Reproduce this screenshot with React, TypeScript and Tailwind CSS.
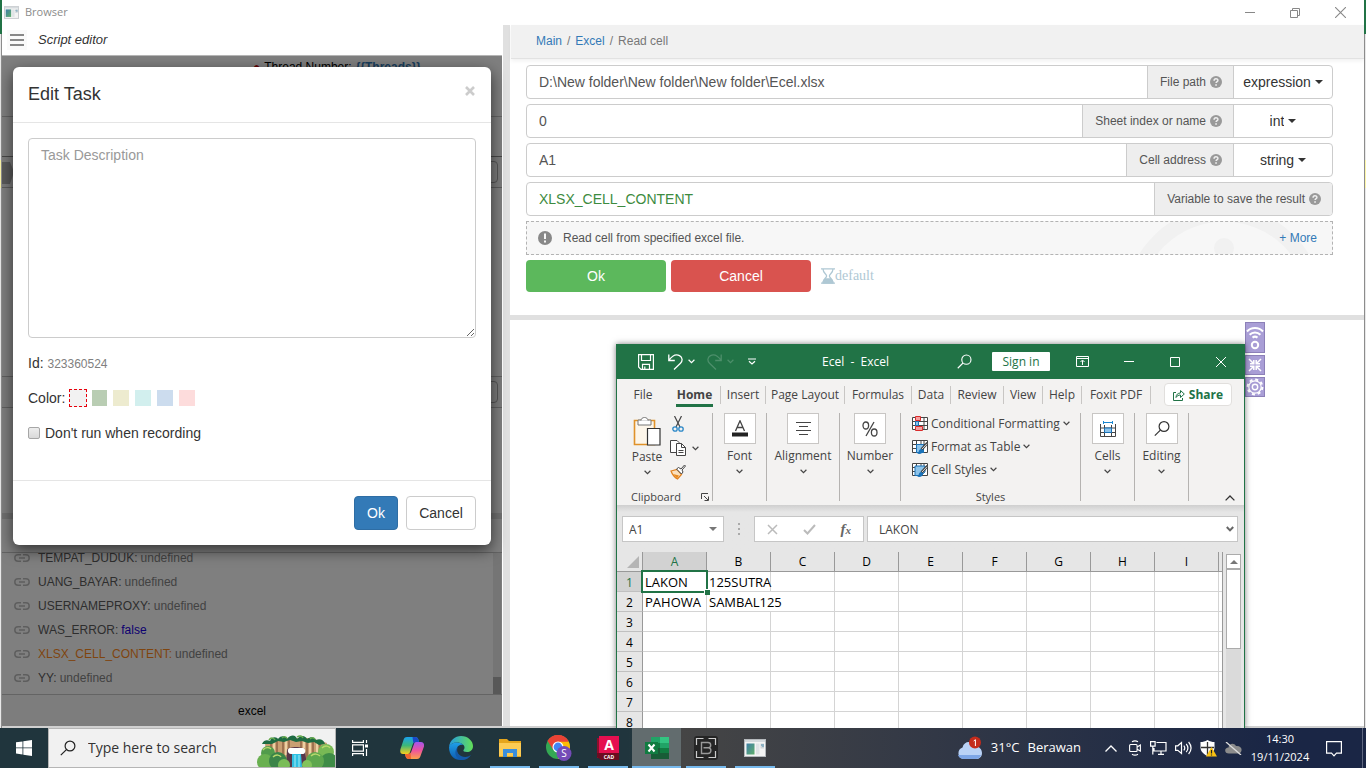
import React from "react";
import type { ReactNode } from "react";

const ui = "font-['Open_Sans','Noto_Sans',sans-serif]";

/* ---------- small shared drawings ---------- */

function Chevron({ className = "" }: { className?: string }) {
  return (
    <svg viewBox="0 0 7 5" className={`h-[5px] w-[7px] shrink-0 ${className}`} fill="none" stroke="currentColor" strokeWidth="1.2">
      <path d="M0.6 0.8 3.5 3.6 6.4 0.8" />
    </svg>
  );
}

function Magnifier({ className = "" }: { className?: string }) {
  return (
    <svg viewBox="0 0 16 16" className={className} fill="none" stroke="currentColor" strokeWidth="1.2">
      <circle cx="10" cy="6" r="4.9" />
      <path d="M6.4 9.6 0.8 15.2" />
    </svg>
  );
}

function AppIcon({ className = "" }: { className?: string }) {
  return (
    <svg viewBox="0 0 22 18" className={className}>
      <defs>
        <linearGradient id="appicon" x1="0" y1="0" x2="1" y2="1">
          <stop offset="0" stopColor="#3f7fa8" />
          <stop offset="1" stopColor="#5fae6a" />
        </linearGradient>
      </defs>
      <rect x="0.5" y="0.5" width="21" height="17" fill="#f4f4f4" stroke="#b5b9bd" />
      <rect x="1" y="1" width="20" height="2" fill="#d5dadd" />
      <rect x="2.5" y="4.5" width="8" height="11" fill="url(#appicon)" />
      <rect x="12" y="4.5" width="3.5" height="11" fill="#dfe3e6" />
      <rect x="16.5" y="4.5" width="3.5" height="5" fill="#cfd5d8" />
      <path d="M17 6h1M19 5v3" stroke="#4c8fb0" />
    </svg>
  );
}

/* ---------- script editor pane ---------- */

const variables = [
  { name: "TEMPAT_DUDUK:", value: "undefined", nameColor: "text-[#5c5c5c]", valueColor: "text-[#858585]" },
  { name: "UANG_BAYAR:", value: "undefined", nameColor: "text-[#5c5c5c]", valueColor: "text-[#858585]" },
  { name: "USERNAMEPROXY:", value: "undefined", nameColor: "text-[#5c5c5c]", valueColor: "text-[#858585]" },
  { name: "WAS_ERROR:", value: "false", nameColor: "text-[#5c5c5c]", valueColor: "text-[#1a00e0]" },
  { name: "XLSX_CELL_CONTENT:", value: "undefined", nameColor: "text-[#ff8a1c]", valueColor: "text-[#858585]" },
  { name: "YY:", value: "undefined", nameColor: "text-[#5c5c5c]", valueColor: "text-[#858585]" },
];

function LinkIcon() {
  return (
    <svg viewBox="0 0 16 8" className="h-2 w-4" fill="none" stroke="#bdbdbd" strokeWidth="1.5">
      <path d="M7 0.8H4a3.2 3.2 0 0 0 0 6.4h3M9 0.8h3a3.2 3.2 0 0 1 0 6.4H9M5 4h6" />
    </svg>
  );
}

const swatches = [
  { name: "green", cls: "bg-[#b9cdb3]" },
  { name: "yellow", cls: "bg-[#edebcf]" },
  { name: "teal", cls: "bg-[#d2efee]" },
  { name: "blue", cls: "bg-[#ccdcee]" },
  { name: "pink", cls: "bg-[#fddcdc]" },
];

function EditTaskDialog() {
  return (
    <div role="dialog" aria-label="Edit Task" className="absolute inset-x-[11px] top-[11px] rounded-md bg-white text-sm text-[#333] shadow-[0_5px_15px_rgba(0,0,0,0.6)]">
      <div className="flex h-14 items-start justify-between border-b border-[#e5e5e5] p-[15px]">
        <h4 className="text-lg leading-6">Edit Task</h4>
        <button aria-label="Close" className="flex h-[18px] w-3 items-center justify-center">
          <svg viewBox="0 0 10 10" className="h-[10px] w-[10px]" stroke="#ccc" strokeWidth="2.6">
            <path d="M1 1 9 9M9 1 1 9" />
          </svg>
        </button>
      </div>
      <div className="flex h-[357px] flex-col px-[15px] pt-[15px]">
        <textarea aria-label="Task Description" placeholder="Task Description" className="block h-[200px] w-full rounded border border-[#ccc] px-3 py-1.5 text-sm placeholder:text-[#999]" />
        <div className="mt-[15px] leading-5">
          Id: <span className="text-xs text-[#808080]">323360524</span>
        </div>
        <div className="mt-[15px] flex h-5 items-center">
          <span className="mr-1 leading-5">Color:</span>
          <button aria-label="default" className="mr-[5px] h-[18px] w-[18px] border border-dashed border-red-600 bg-[#f2f2f2]" />
          <div className="flex gap-[6px]">
            {swatches.map((s) => (
              <button key={s.name} aria-label={s.name} className={`h-4 w-4 first:w-[15px] ${s.cls}`} />
            ))}
          </div>
        </div>
        <label className="mt-[15px] flex h-5 items-center gap-[5px]">
          <input type="checkbox" className="h-3 w-3 appearance-none rounded-[2px] border border-[#a6a6a6] bg-linear-to-b from-[#ededed] to-[#d9d9d9]" />
          Don't run when recording
        </label>
      </div>
      <div className="flex justify-end gap-2 border-t border-[#e5e5e5] p-[15px]">
        <button className="h-[34px] w-11 rounded border border-[#2e6da4] bg-[#337ab7] text-white">Ok</button>
        <button className="h-[34px] w-[70px] rounded border border-[#ccc] bg-white">Cancel</button>
      </div>
    </div>
  );
}

function ScriptEditor() {
  return (
    <section className="flex w-[500px] shrink-0 flex-col font-['Liberation_Sans',Arial,sans-serif]">
      <header className="flex h-[31px] items-center gap-[11px] border-b border-[#b5b5b5] px-[5px]">
        <button aria-label="Menu" className="flex h-5 w-5 items-center justify-center bg-[#fafafa]">
          <svg viewBox="0 0 14 12" className="h-3 w-[14px]" stroke="#888" strokeWidth="2">
            <path d="M0 1h14M0 6h14M0 11h14" />
          </svg>
        </button>
        <h1 className="text-[13px] leading-5 text-[#333] italic">Script editor</h1>
      </header>
      <div className="relative flex min-h-0 flex-1 flex-col bg-white">
        <div className="flex h-[61px] shrink-0 items-start border-b border-[#c8c8c8] pl-[251px] text-xs leading-[22px]">
          <span className="mr-1 text-red-700">●</span>
          <span className="mr-1">Thread Number:</span>
          <b className="text-[#337ab7]">{"{{Threads}}"}</b>
        </div>
        <div className="h-10 shrink-0 border-b border-[#909090]" />
        <div className="flex h-[31px] shrink-0 items-center justify-between border-b border-[#b8b8b8] bg-[#f8f8f8]">
          <svg viewBox="0 0 12 28" className="h-7 w-3" fill="#b4b4b4">
            <path d="M0 4h8l4 10-4 12H0z" />
          </svg>
          <div className="mr-1 h-[22px] w-8 rounded border border-[#aaa]" />
        </div>
        <div className="h-[189px] shrink-0 border-b border-[#c0c0c0]" />
        <div className="flex h-[31px] shrink-0 items-center justify-end border-b border-[#c0c0c0] bg-[#f8f8f8]">
          <div className="mr-1 h-[22px] w-8 rounded border border-[#aaa]" />
        </div>
        <div className="h-[105px] shrink-0" />
        <div className="h-1.5 shrink-0 bg-[#e0e0e0]" />
        <div className="h-[34px] shrink-0 border-b border-[#c8c8c8]" />
        <div className="flex min-h-0 flex-1">
          <ul className="flex min-h-0 flex-1 flex-col justify-end overflow-hidden pb-1 pl-3 text-xs">
            {variables.map((v) => (
              <li key={v.name} className="flex h-6 shrink-0 items-center">
                <LinkIcon />
                <span className={`mr-[3px] ml-2 ${v.nameColor}`}>{v.name}</span>
                <span className={v.valueColor}>{v.value}</span>
              </li>
            ))}
          </ul>
          <div className="mr-px flex w-2 flex-col justify-end bg-[#eaeaea]">
            <div className="h-[17px] bg-[#b0b0b0]" />
          </div>
        </div>
        <footer className="flex h-8 shrink-0 items-center justify-center border-t border-[#c8c8c8] bg-[#fafafa] text-xs text-black">excel</footer>
        <div className="absolute inset-0 bg-black/50" />
        <EditTaskDialog />
      </div>
    </section>
  );
}

/* ---------- action form ---------- */

function HelpDot() {
  return (
    <svg viewBox="0 0 12 12" className="h-3 w-3" fill="none">
      <circle cx="6" cy="6" r="6" fill="#999" />
      <path d="M4.1 4.7c0-2.5 3.8-2.4 3.8-.3 0 1.3-1.8 1.2-1.8 2.7" stroke="#eee" strokeWidth="1.5" />
      <path d="M5.2 8.2h1.7v1.5H5.2z" fill="#eee" />
    </svg>
  );
}

type FieldProps = { id: string; label: string; value: string; kind?: string; green?: boolean };

function Field({ id, label, value, kind, green }: FieldProps) {
  return (
    <div className="flex h-[34px] overflow-hidden rounded border border-[#ccc] bg-white text-sm">
      <input id={id} defaultValue={value} className={`min-w-0 flex-1 px-3 outline-none ${green ? "text-[#3d8b40]" : "text-[#555]"}`} />
      <label htmlFor={id} className="flex items-center gap-1 border-l border-[#ccc] bg-[#eee] pr-[11px] pl-3 text-xs text-[#555]">
        {label}
        <HelpDot />
      </label>
      {kind && (
        <label className="flex w-[99px] items-center justify-center gap-1 border-l border-[#ccc] text-[#333]">
          <select aria-label={`${label} type`} className="field-sizing-content appearance-none bg-transparent outline-none">
            <option>{kind}</option>
          </select>
          <svg viewBox="0 0 8 4" className="h-1 w-2" fill="#333">
            <path d="M0 0h8L4 4z" />
          </svg>
        </label>
      )}
    </div>
  );
}

function ActionForm() {
  return (
    <div className="h-[290px] shrink-0 bg-white font-['Liberation_Sans',Arial,sans-serif]">
      <nav className="flex h-[34px] items-center gap-[5px] border-b border-[#e2e2e2] bg-[#f1f1f1] pb-px pl-[25px] text-xs text-[#777] shadow-[0_2px_4px_rgba(0,0,0,0.06)]">
        <a href="#main" className="text-[#337ab7]">Main</a>
        <span>/</span>
        <a href="#excel" className="text-[#337ab7]">Excel</a>
        <span>/</span>
        <span>Read cell</span>
      </nav>
      <form className="flex flex-col gap-[5px] pt-1.5 pr-[31px] pl-[15px]" onSubmit={(e) => e.preventDefault()}>
        <Field id="path" label="File path" value="D:\New folder\New folder\New folder\Ecel.xlsx" kind="expression" />
        <Field id="sheet" label="Sheet index or name" value="0" kind="int" />
        <Field id="cell" label="Cell address" value="A1" kind="string" />
        <Field id="result" label="Variable to save the result" value="XLSX_CELL_CONTENT" green />
        <div className="relative flex h-[34px] items-center overflow-hidden border border-dashed border-[#b3b3b3] bg-[#f7f7f7] px-[11px] text-xs text-[#555]">
          <svg viewBox="0 0 200 32" className="absolute top-0 right-2 h-8 w-[200px]" fill="none">
            <circle cx="100" cy="84" r="92" stroke="#f1f1f1" strokeWidth="15" />
            <circle cx="100" cy="26" r="10" fill="#f1f1f1" />
          </svg>
          <svg viewBox="0 0 14 14" className="mr-[11px] h-[14px] w-[14px]">
            <circle cx="7" cy="7" r="7" fill="#888" />
            <path d="M6 2.5h2v5.5H6zM6 9.4h2v2H6z" fill="#f7f7f7" />
          </svg>
          <span>Read cell from specified excel file.</span>
          <a href="#more" className="relative mr-1 ml-auto text-[#337ab7]">+ More</a>
        </div>
        <div className="flex items-center gap-[5px]">
          <button className="h-8 w-[140px] rounded bg-[#5cb85c] text-sm text-white">Ok</button>
          <button className="h-8 w-[140px] rounded bg-[#d9534f] text-sm text-white">Cancel</button>
          <button className="ml-[5px] flex items-center font-['Liberation_Serif','Times_New_Roman',serif] text-sm text-[#afc8d4]">
            <svg viewBox="0 0 14 16" className="h-4 w-[14px]" fill="none" stroke="#afc8d4" strokeWidth="1.3">
              <path d="M0 .8h14M0 15.2h14M2 1c0 4 3.6 5 3.6 7S2 11 2 15M12 1c0 4-3.6 5-3.6 7S12 11 12 15" />
              <path d="M2 15c0-2 1-3.5 2.4-4h5.2c1.4.5 2.4 2 2.4 4z" fill="#afc8d4" />
            </svg>
            default
          </button>
        </div>
      </form>
    </div>
  );
}

function SideTools() {
  const cls = "flex w-5 items-center justify-center border border-[#8c80b8] bg-[#a99ed6] text-white";
  return (
    <div className="absolute top-[2px] right-[99px] flex flex-col gap-0.5">
      <button aria-label="Network" className={`${cls} h-[31px]`}>
        <svg viewBox="0 0 18 26" className="h-[26px] w-[18px]" fill="none" stroke="currentColor" strokeWidth="2">
          <path d="M1 6.5c4-4.6 12-4.6 16 0M3.6 9.8c3-3 7.8-3 10.800 0M6.5 12.6c1.500-1.200 3.500-1.200 5 0" />
          <circle cx="9" cy="20" r="3.2" />
        </svg>
      </button>
      <button aria-label="Collapse" className={`${cls} h-5`}>
        <svg viewBox="0 0 14 14" className="h-[14px] w-[14px]" fill="none" stroke="currentColor" strokeWidth="1.5">
          <path d="M1 1l4.5 4.5M2 5.700h3.800V2M13 1 8.500 5.500M12 5.700H8.200V2M1 13l4.500-4.500M2 8.300h3.800V12M13 13 8.500 8.500M12 8.300H8.200V12" />
        </svg>
      </button>
      <button aria-label="Settings" className={`${cls} h-5`}>
        <svg viewBox="0 0 18 18" className="h-[18px] w-[18px]" fill="none" stroke="currentColor">
          <circle cx="9" cy="9" r="7.400" strokeWidth="2" strokeDasharray="3 2.810" />
          <circle cx="9" cy="9" r="6.200" strokeWidth="1.200" />
          <circle cx="9" cy="9" r="2.700" strokeWidth="1.400" />
        </svg>
      </button>
    </div>
  );
}

/* ---------- Excel window ---------- */

function ExcelTitleBar() {
  return (
    <header className="flex h-[35px] items-center bg-[#217346] text-white">
      <div className="flex w-[205px] items-center pl-[21px]">
        <button aria-label="Save">
          <svg viewBox="0 0 16 16" className="h-4 w-4" fill="none" stroke="currentColor" strokeWidth="1.2">
            <path d="M.6.6h14.800v14.800H3L.6 13zM3.500.6v5.900h9V.6M4.500 15.400v-5h7v5M6.800 15v-2.500" />
          </svg>
        </button>
        <button aria-label="Undo" className="ml-[14px]">
          <svg viewBox="0 0 15 16" className="h-4 w-[15px]" fill="none" stroke="currentColor" strokeWidth="1.3">
            <path d="M.8.5v6h6M1 6.200C4 2 8-.3 11.500 1.600c3.200 1.800 3.300 5.300 1 7.600L6 15.500" />
          </svg>
        </button>
        <Chevron className="ml-[5px]" />
        <button aria-label="Redo" className="ml-[12px] text-[#4d8f6b]">
          <svg viewBox="0 0 15 16" className="h-4 w-[15px]" fill="none" stroke="currentColor" strokeWidth="1.3">
            <path d="M14.200.5v6h-6M14 6.200C11 2 7-.3 3.500 1.600.3 3.400.2 6.900 2.500 9.200L9 15.500" />
          </svg>
        </button>
        <Chevron className="ml-[5px] text-[#4d8f6b]" />
        <button aria-label="Customize toolbar" className="ml-[14px]">
          <svg viewBox="0 0 8 7" className="h-[7px] w-2" fill="none" stroke="currentColor" strokeWidth="1.2">
            <path d="M0 1h8M1 3.200 4 6l3-2.800" />
          </svg>
        </button>
      </div>
      <h2 className="text-xs whitespace-pre">Ecel  -  Excel</h2>
      <div className="ml-auto flex items-center pr-[18px]">
        <button aria-label="Search"><Magnifier className="h-[15px] w-[15px]" /></button>
        <button className="ml-5 h-[19px] w-[58px] rounded-[1px] bg-white text-xs leading-[19px] text-[#217346]">Sign in</button>
        <button aria-label="Ribbon display options" className="ml-[26px]">
          <svg viewBox="0 0 13 11" className="h-[11px] w-[13px]" fill="none" stroke="currentColor">
            <path d="M.5.5h12v10H.5zM.5 2.500h12M6.500 9V4.500M4.500 6l2-2 2 2" />
          </svg>
        </button>
        <button aria-label="Minimize" className="ml-[35px]">
          <svg viewBox="0 0 10 10" className="h-[10px] w-[10px]" stroke="currentColor"><path d="M0 4.500h10" /></svg>
        </button>
        <button aria-label="Maximize" className="ml-9">
          <svg viewBox="0 0 10 10" className="h-[10px] w-[10px]" fill="none" stroke="currentColor"><path d="M.5.5h9v9h-9z" /></svg>
        </button>
        <button aria-label="Close" className="ml-9">
          <svg viewBox="0 0 10 10" className="h-[10px] w-[10px]" stroke="currentColor"><path d="M0 0l10 10M10 0 0 10" /></svg>
        </button>
      </div>
    </header>
  );
}

const tabs = [
  { label: "File", cls: "w-[52px]" },
  { label: "Home", cls: "w-[52px] border-r" },
  { label: "Insert", cls: "w-[45px] border-r" },
  { label: "Page Layout", cls: "w-[79px] border-r" },
  { label: "Formulas", cls: "w-[67px] border-r" },
  { label: "Data", cls: "w-[39px] border-r" },
  { label: "Review", cls: "w-[53px] border-r" },
  { label: "View", cls: "w-[39px] border-r" },
  { label: "Help", cls: "w-[39px] border-r" },
  { label: "Foxit PDF", cls: "w-[69px] border-r" },
];

function RibbonTabs() {
  return (
    <nav className="flex h-[31px] items-center text-xs text-[#444]">
      {tabs.map((t) => (
        <button key={t.label} className={`flex h-[18px] items-center justify-center overflow-visible border-[#c8c6c4] whitespace-nowrap ${t.cls}`}>
          {t.label === "Home" ? (
            <span className="relative font-bold">
              Home
              <span className="absolute -inset-x-px -bottom-1 h-[3px] bg-[#217346]" />
            </span>
          ) : (
            t.label
          )}
        </button>
      ))}
      <button className="mr-3 ml-auto flex h-[23px] w-[68px] items-center justify-center gap-1 rounded-sm border border-[#e1dfdd] bg-white font-bold text-[#217346]">
        <svg viewBox="0 0 12 12" className="h-3 w-3" fill="none" stroke="currentColor">
          <path d="M3 3.500H.5v8h9V9M3 8.500C3 5.500 5 4 7.500 4V1.500L11.300 5 7.500 8.500V6C5.500 6 4 6.800 3 8.500z" />
        </svg>
        Share
      </button>
    </nav>
  );
}

function TileGroup({ label, width, children }: { label: string; width: string; children: ReactNode }) {
  return (
    <div className={`flex shrink-0 flex-col items-center border-r border-[#b5b3b1] ${width}`}>
      <button className="flex h-[31px] w-8 items-center justify-center border border-[#c8c6c4] bg-white text-[#333]" aria-label={label}>{children}</button>
      <span className="mt-1 text-xs leading-4">{label}</span>
      <Chevron className="mt-[5px]" />
    </div>
  );
}

function GridGlyph({ kind }: { kind: "cond" | "table" | "style" }) {
  return (
    <svg viewBox="0 0 16 16" className="h-4 w-4" fill="none" stroke="#444">
      <path d="M.5 1.500h15v12H.5z" fill="#fff" />
      {kind === "cond" && (
        <g>
          <path d="M4.500 1v12.500M12 1v12.500M.5 5.500h15M.5 9.500h15" />
          <path d="M3.500.5h5v4h-5zM3.500 10.500h7v4h-7z" fill="#f6a0a0" stroke="#d92c2c" />
          <path d="M3.500 5.500h3v4h-3z" fill="#8ec4ea" stroke="#1a72b8" />
        </g>
      )}
      {kind !== "cond" && (
        <g>
          <path d="M4.500 1v12.500M9 1v4M12 1v4M.5 5.500h15M.5 9.500h4" />
          <path d={kind === "table" ? "M4.500 5.500h7v8h-7z" : "M3 4h10v6l-4 3.500H3z"} fill="#8ec4ea" stroke="#1a72b8" />
          <path d="M15.500 4 9.500 10.500" stroke="#444" strokeWidth="2.600" />
          <path d="M15 4.800 10 10" stroke="#fff" strokeWidth=".8" />
          <path d="M9.500 10c-2-.2-2.500 1.500-3 3.200-.3.900-1 1.300-1.800 1.300 3 1.200 6.500.2 6.500-3z" fill="#1a72b8" stroke="none" />
        </g>
      )}
    </svg>
  );
}

function Ribbon() {
  return (
    <div className="flex h-[95px] pt-[3px] pb-1 text-[#444]">
      <div className="flex w-[96px] shrink-0 flex-col justify-between border-r border-[#b5b3b1]">
        <div className="flex pl-[14px]">
          <div className="flex w-[32px] flex-col items-center pt-[3px]">
            <button aria-label="Paste">
              <svg viewBox="0 0 28 30" className="h-[30px] w-7" fill="none">
                <path d="M1.500 4.500h20v24h-20z" fill="#fdf6ea" stroke="#e0922a" strokeWidth="1.600" />
                <path d="M5 4h13v5H5z" fill="#fff" stroke="#777" />
                <path d="M8 4.500c0-4 7-4 7 0" fill="#fff" stroke="#777" />
                <path d="M14.500 12.500h12.500v16.500h-12.500z" fill="#fff" stroke="#333" strokeWidth="1.200" />
              </svg>
            </button>
            <span className="mt-[3px] text-xs leading-4">Paste</span>
            <Chevron className="mt-[5px]" />
          </div>
          <div className="flex flex-col items-start gap-2 pt-[3px] pl-[7px]">
            <button aria-label="Cut">
              <svg viewBox="0 0 12 16" className="ml-0.5 h-4 w-3" fill="none">
                <path d="M2.500 0 8 11M9.500 0 4 11" stroke="#444" strokeWidth="1.200" />
                <circle cx="3" cy="13" r="2.200" stroke="#2b88c8" strokeWidth="1.300" />
                <circle cx="9" cy="13" r="2.200" stroke="#2b88c8" strokeWidth="1.300" />
              </svg>
            </button>
            <div className="flex items-center gap-[6px]">
              <button aria-label="Copy">
                <svg viewBox="0 0 16 16" className="h-4 w-4" fill="#fff" stroke="#444">
                  <path d="M.5.5h6.500l2 2v10H.5z" />
                  <path d="M6.500 3.500h5l4 4v8h-9z" />
                  <path d="M11.500 3.500v4h4M8.500 10.500h5M8.500 12.500h5" fill="none" />
                </svg>
              </button>
              <Chevron />
            </div>
            <button aria-label="Format painter">
              <svg viewBox="0 0 16 16" className="h-4 w-4" fill="none">
                <path d="M1 7l6-1.500 4.500 5L7.500 15c-3-1.500-5-4-6.500-8z" fill="#fbe0bd" stroke="#e07f1c" strokeWidth="1.200" />
                <path d="M3 10l6 1.500L7 14.500z" fill="#e88a20" />
                <path d="M6.500 5 8.500 3.500 11 5l3.500-4 1 1L12 6l1 2-1.500 2z" fill="#fff" stroke="#444" />
              </svg>
            </button>
          </div>
        </div>
        <div className="flex items-center justify-between pr-[3px] pl-[14px] text-[11px] leading-2">
          Clipboard
          <svg viewBox="0 0 8 8" className="h-2 w-2" fill="none" stroke="#444"><path d="M.5 6V.5H7M3 3l4 4M7.500 3.500v4h-4" /></svg>
        </div>
      </div>
      <TileGroup label="Font" width="w-[54px]">
        <svg viewBox="0 0 16 18" className="h-[18px] w-4" fill="none" stroke="#444" strokeWidth="1.300">
          <path d="M3.500 11 8 .8 12.500 11M5 7.500h6" />
          <path d="M0 14.500h16" strokeWidth="4" stroke="#222" />
        </svg>
      </TileGroup>
      <TileGroup label="Alignment" width="w-[73px]">
        <svg viewBox="0 0 15 14" className="h-[14px] w-[15px]" stroke="#444"><path d="M0 .5h15M3 4.500h9M0 8.500h15M3 12.500h9" /></svg>
      </TileGroup>
      <TileGroup label="Number" width="w-[61px]">
        <svg viewBox="0 0 16 16" className="h-4 w-4" fill="none" stroke="#444" strokeWidth="1.300">
          <ellipse cx="3.800" cy="4.500" rx="2.800" ry="3.500" />
          <ellipse cx="12.200" cy="11.500" rx="2.800" ry="3.500" />
          <path d="M12 1 4 15" />
        </svg>
      </TileGroup>
      <div className="flex w-[180px] shrink-0 flex-col justify-between border-r border-[#b5b3b1] text-xs">
        <div className="flex flex-col items-start pl-[11px]">
          <button className="flex h-[23px] items-center gap-[3px] pb-0.5 whitespace-nowrap"><GridGlyph kind="cond" />Conditional Formatting<Chevron /></button>
          <button className="flex h-[23px] items-center gap-[3px] pb-0.5 whitespace-nowrap"><GridGlyph kind="table" />Format as Table<Chevron /></button>
          <button className="flex h-[23px] items-center gap-[3px] pb-0.5 whitespace-nowrap"><GridGlyph kind="style" />Cell Styles<Chevron /></button>
        </div>
        <div className="text-center text-[11px] leading-2">Styles</div>
      </div>
      <TileGroup label="Cells" width="w-[54px]">
        <svg viewBox="0 0 16 16" className="h-4 w-4" fill="none" stroke="#444">
          <path d="M.5 3v12.500h15V3M.5 7h15M.5 11.500h15M4.500 4v11M11.500 4v11" />
          <path d="M4.500 7h7v4.500h-7z" fill="#8ec4ea" stroke="#1a72b8" />
          <path d="M3.500 1.500h9M3.500 0v3M12.500 0v3" stroke="#1a86d0" />
        </svg>
      </TileGroup>
      <TileGroup label="Editing" width="w-[54px]"><Magnifier className="h-[17px] w-4" /></TileGroup>
      <button aria-label="Collapse ribbon" className="mr-[9px] ml-auto self-end">
        <svg viewBox="0 0 10 6" className="h-1.5 w-[10px]" fill="none" stroke="#333" strokeWidth="1.300"><path d="M.6 5.400 5 1l4.400 4.400" /></svg>
      </button>
    </div>
  );
}

function FormulaBar() {
  return (
    <div className="flex h-[47px] items-start bg-linear-to-b from-[#cfcfcf] via-[#e6e6e6] via-15% to-[#e6e6e6] pt-[11px] pr-[6px] pl-[5px] text-xs text-[#444]">
      <div className="flex h-[26px] w-[102px] items-center justify-between border border-[#c6c6c6] bg-white pr-1.5">
        <input aria-label="Name box" defaultValue="A1" className="w-16 bg-transparent pt-px pl-[6px] outline-none" />
        <svg viewBox="0 0 8 4" className="h-1 w-2" fill="#777"><path d="M0 0h8L4 4z" /></svg>
      </div>
      <svg viewBox="0 0 2 12" className="mt-[7px] ml-[14px] h-3 w-0.5" fill="#aaa"><path d="M0 0h2v2H0zM0 5h2v2H0zM0 10h2v2H0z" /></svg>
      <div className="ml-[14px] flex h-[26px] w-[110px] items-center justify-between border border-[#c6c6c6] bg-white px-3">
        <button aria-label="Cancel entry"><svg viewBox="0 0 11 11" className="h-[11px] w-[11px]" stroke="#bbb" strokeWidth="1.500"><path d="M1 1l9 9M10 1l-9 9" /></svg></button>
        <button aria-label="Enter"><svg viewBox="0 0 13 11" className="h-[11px] w-[13px]" fill="none" stroke="#bbb" strokeWidth="2"><path d="M1 6l3.500 3.500L12 1" /></svg></button>
        <button className="font-['Liberation_Serif',serif] text-[15px] leading-5 font-bold text-[#666] italic">f<span className="text-[11px]">x</span></button>
      </div>
      <div className="ml-[3px] flex h-[26px] flex-1 items-center border border-[#c6c6c6] bg-white pr-[3px]">
        <input aria-label="Formula" defaultValue="LAKON" className="min-w-0 flex-1 bg-transparent pt-px pl-[11px] outline-none" />
        <svg viewBox="0 0 8 6" className="h-1.5 w-2" fill="none" stroke="#666" strokeWidth="2"><path d="M.8 1 4 4.400 7.200 1" /></svg>
      </div>
    </div>
  );
}

const columns = ["A", "B", "C", "D", "E", "F", "G", "H", "I"];
const cells: string[][] = [["LAKON", "125SUTRA"], ["PAHOWA", "SAMBAL125"], [], [], [], [], [], []];

function Sheet() {
  return (
    <div className="flex min-h-0 flex-1 overflow-hidden bg-[#e6e6e6] text-xs text-black">
      <div className="h-[220px] w-[606px] shrink-0 border-r border-[#999]">
        <table className="w-[605px] table-fixed border-separate border-spacing-0 bg-white">
          <colgroup>
            <col className="w-[26px]" />
            {columns.map((c) => <col key={c} className="w-16" />)}
            <col className="w-[3px]" />
          </colgroup>
          <thead>
            <tr className="h-5">
              <th className="border-r border-b border-[#999] bg-[#e6e6e6] p-0">
                <svg viewBox="0 0 12 12" className="ml-[10px] h-3 w-3" fill="#b5b5b5"><path d="M12 0v12H0z" /></svg>
              </th>
              {columns.map((c) => (
                <th key={c} className={`border-r border-b border-[#999] p-0 font-normal ${c === "A" ? "bg-[#d2d2d2] text-[#217346]" : "bg-[#e6e6e6]"}`}>{c}</th>
              ))}
              <th className="border-b border-[#999] bg-[#e6e6e6] p-0" />
            </tr>
          </thead>
          <tbody>
            {cells.map((row, r) => (
              <tr key={r} className="h-5">
                <th className={`border-r border-b border-r-[#999] border-b-[#c0c0c0] p-0 font-normal ${r === 0 ? "bg-[#d2d2d2] text-[#217346]" : "bg-[#e6e6e6]"}`}>
                  <div className="h-[19px] leading-[21px]">{r + 1}</div>
                </th>
                {columns.map((c, i) => (
                  <td key={c} className={`relative border-b border-[#d4d4d4] p-0 whitespace-nowrap ${r === 1 && i === 1 ? "" : "border-r"}`}>
                    <div className="h-[19px] w-[61px] pl-[2px] text-[13px] leading-[21px]">{row[i] ?? ""}</div>
                    {r === 0 && i === 0 && (
                      <>
                        <span className="absolute -inset-0.5 border-2 border-[#217346]" />
                        <span className="absolute -right-1 -bottom-1 z-10 h-[6px] w-[6px] border-t border-l border-white bg-[#217346]" />
                      </>
                    )}
                  </td>
                ))}
                <td className="border-b border-[#d4d4d4] p-0" />
              </tr>
            ))}
          </tbody>
        </table>
      </div>
      <div className="ml-[3px] flex w-[15px] flex-col pt-0.5">
        <button aria-label="Scroll up" className="flex h-[15px] shrink-0 items-center justify-center border border-[#ababab] bg-white">
          <svg viewBox="0 0 8 4" className="h-1 w-2" fill="#777"><path d="M0 4h8L4 0z" /></svg>
        </button>
        <div className="h-20 shrink-0 border border-[#ababab] bg-white" />
        <div className="flex-1 bg-[#dadada]" />
      </div>
    </div>
  );
}

function ExcelWindow() {
  return (
    <div className={`absolute top-6 right-[119px] -bottom-0.5 z-10 flex w-[629px] flex-col overflow-hidden border-x border-[#217346] bg-[#f3f2f1] shadow-[0_0_6px_rgba(0,0,0,0.5)] ${ui}`}>
      <ExcelTitleBar />
      <RibbonTabs />
      <Ribbon />
      <FormulaBar />
      <Sheet />
    </div>
  );
}

/* ---------- taskbar ---------- */

function TaskItem({ label, children, open, active }: { label: string; children: ReactNode; open?: boolean; active?: boolean }) {
  return (
    <button aria-label={label} className={`flex h-10 w-[49px] flex-col items-center justify-between ${active ? "bg-[#626c6e]" : ""}`}>
      <span className="flex flex-1 items-center pt-px">{children}</span>
      <span className={`h-0.5 ${active ? "w-full" : "w-10"} ${open ? "bg-[#76b9ed]" : ""}`} />
    </button>
  );
}

function Waterfall() {
  return (
    <svg viewBox="0 0 78 32" className="h-8 w-[78px] self-end">
      <path d="M8 8 24 3h30l16 5-2 20H10z" fill="#c99f72" />
      <path d="M14 7v18M20 6v20M26 4v20M32 4v10M44 4v10M50 4v20M56 5v18M63 6v20" stroke="#8f6446" strokeWidth="1.500" />
      <path d="M17 6v20M29 4v16M47 4v9M53 5v18M60 6v18" stroke="#ecd0a3" strokeWidth="2" />
      <path d="M30 15c2-4 16-4 18 0l2 17H29z" fill="#59384a" />
      <path d="M33 13h13c3 0 3 6 0 6H34c-4 0-4-6-1-6z" fill="#fff" />
      <path d="M35 19h9l1 13H35z" fill="#30c0e2" />
      <path d="M38 20v12M42 20v12" stroke="#a7ecf6" />
      <path d="M5 9c2-5 6-4 8-3 2-5 7-4 8-2 3-4 8-3 9 0 4-5 9-4 10 0 4-5 9-3 10 0 4-3 8-2 9 1 4-2 8 0 9 4l-6 1-5-3-6 1-6-2-6 1-6-2-6 2-6-1-6 3z" fill="#1e6b42" />
      <path d="M12 5c2-3 5-2 6 0M25 3c2-2 4-1 5 0M40 2c3-2 5-1 6 1M53 4c2-2 4-1 5 0" stroke="#65aa4c" strokeWidth="1.500" fill="none" />
      <circle cx="11" cy="18" r="7" fill="#519b4b" />
      <circle cx="8" cy="27" r="8" fill="#69b050" />
      <circle cx="21" cy="26" r="9" fill="#3b8448" />
      <circle cx="27" cy="30" r="6" fill="#7abd58" />
      <circle cx="69" cy="17" r="8" fill="#78b955" />
      <circle cx="72" cy="27" r="9" fill="#3f8c47" />
      <circle cx="58" cy="26" r="9" fill="#5ea74e" />
      <circle cx="50" cy="30" r="5" fill="#82c35b" />
      <path d="M6 15c2-3 6-3 8-1M16 22c3-3 7-2 8 0M54 21c3-3 7-2 9 0M65 13c3-3 7-2 8 0" stroke="#b7d86c" strokeWidth="1.500" fill="none" />
    </svg>
  );
}

function Taskbar() {
  return (
    <footer className={`relative z-20 flex h-10 shrink-0 bg-linear-to-r from-[#20353d] from-46% via-[#454545] via-50% to-[#1a2645] to-93% text-white ${ui}`}>
      <button aria-label="Start" className="flex w-12 items-center justify-center">
        <svg viewBox="0 0 16 16" className="h-4 w-4" fill="#fff">
          <path d="M0 2.300 6.500 1.400v6.100H0zM7.300 1.300 16 0v7.500H7.300zM0 8.300h6.500v6.200L0 13.600zM7.300 8.300H16V16l-8.700-1.300z" />
        </svg>
      </button>
      <div className="flex w-72 items-center border border-[#b5b5b5] bg-[#f1f1f1] pl-[11px] text-[#222]">
        <Magnifier className="h-4 w-4" />
        <input aria-label="Search" placeholder="Type here to search" className="ml-3 min-w-0 flex-1 bg-transparent text-sm outline-none placeholder:text-[#333]" />
        <Waterfall />
      </div>
      <button aria-label="Task view" className="flex w-[51px] items-center justify-center pr-[3px]">
        <svg viewBox="0 0 16 16" className="h-4 w-4" fill="none" stroke="#fff" strokeWidth="1.200">
          <path d="M.6 0v2.400h10.800V0M.6 16v-2.400h10.800V16M.6 4.800h10.800v6.400H.6zM14.500 0v3M14.500 9v7" />
          <path d="M13 4.500h3v3h-3z" fill="#fff" stroke="none" />
        </svg>
      </button>
      <TaskItem label="Copilot">
        <svg viewBox="0 0 24 22" className="h-[22px] w-6">
          <defs>
            <linearGradient id="cpa" x1="0" y1="0" x2="0" y2="1"><stop offset="0" stopColor="#1aa2f0" /><stop offset=".5" stopColor="#3cb878" /><stop offset="1" stopColor="#f8cf1e" /></linearGradient>
            <linearGradient id="cpb" x1="0" y1="0" x2="0" y2="1"><stop offset="0" stopColor="#a455ee" /><stop offset=".5" stopColor="#ee549c" /><stop offset="1" stopColor="#fca24a" /></linearGradient>
          </defs>
          <path d="M7 0h8c2 0 3 1 3.500 3L19 5h-3c-2 0-3 1-3.500 3L10 15c-.6 2-1.500 2-3 2H3c-3 0-3-3-2.500-5L3.500 3C4 1 5 0 7 0z" fill="url(#cpa)" />
          <path d="M17 22H9c-2 0-3-1-3.500-3L5 17h3c2 0 3-1 3.500-3L14 7c.6-2 1.500-2 3-2h4c3 0 3.500 3 2.800 5l-3.300 9c-.6 2-1.500 3-3.500 3z" fill="url(#cpb)" />
          <path d="M12.500 0H15c2 0 3 1 3.500 3L19 5h-3c-1 0-2 .5-2.600 1.500z" fill="#1b48c8" />
          <path d="M5 17h3c1 0 2-.5 2.600-1.500L11 22H9c-2 0-3-1-3.500-3z" fill="#f0652f" />
        </svg>
      </TaskItem>
      <TaskItem label="Edge">
        <svg viewBox="0 0 24 24" className="h-6 w-6">
          <defs>
            <linearGradient id="eda" x1="0" y1="0" x2="1" y2="0"><stop offset="0" stopColor="#259be2" /><stop offset="1" stopColor="#62df57" /></linearGradient>
            <linearGradient id="edb" x1="0" y1="0" x2="0" y2="1"><stop offset="0" stopColor="#1fa0e8" /><stop offset="1" stopColor="#0e5ab0" /></linearGradient>
          </defs>
          <path d="M0 11C1 4 6 0 12 0c7 0 12 5 12 10 0 4-3 6-6 6s-4-1-3.500-2c.5-.7 1-1.300 1-2.500C15.500 8 11 6.500 8 6.500 4 6.500 1 8.500 0 11z" fill="url(#eda)" />
          <path d="M0 11c1-3 4-4.500 8-4.500 2 0 5 .8 6.500 2.500C9 8 7 12 8 16c1 4 5 6 8 7-7 3-16-1-16-12z" fill="url(#edb)" />
          <path d="M9.500 10.500C7 13 8 18 12 20c4 1.800 7 1 10-1-2 3-5 5-9 5C6 23 4 15 9.500 10.500z" fill="#1459a8" />
        </svg>
      </TaskItem>
      <TaskItem label="File Explorer" open>
        <svg viewBox="0 0 22 20" className="h-5 w-[22px]">
          <path d="M0 1h8l2 2h12v16H0z" fill="#e5a51c" />
          <path d="M0 5h22v13H0z" fill="#fccb54" />
          <path d="M4 11h14v8h-4v-4H8v4H4z" fill="#3b8edc" />
        </svg>
      </TaskItem>
      <TaskItem label="Chrome" open>
        <svg viewBox="0 0 26 26" className="h-[26px] w-[26px]">
          <circle cx="12" cy="12" r="12" fill="#34a853" />
          <path d="M12 12 1.600 6A12 12 0 0 1 22.400 6z" fill="#ea4335" />
          <path d="M12 6.500h10.700A12 12 0 0 1 12 24l4.800-9.200z" fill="#fbbc05" />
          <path d="M1.600 6 7.200 14.700 12 6.500h10.700l-.3-.5A12 12 0 0 0 1.600 6z" fill="#ea4335" />
          <circle cx="12" cy="12" r="5.500" fill="#fff" />
          <circle cx="12" cy="12" r="4.400" fill="#4285f4" />
          <circle cx="18" cy="18.500" r="7.500" fill="#744bb7" />
          <text x="18" y="22" textAnchor="middle" fontSize="10" fill="#fff">S</text>
        </svg>
      </TaskItem>
      <TaskItem label="AutoCAD" open>
        <svg viewBox="0 0 22 24" className="h-6 w-[22px]">
          <path d="M0 2h3v20H0z" fill="#8d0f2c" />
          <path d="M2 0h20v18H2z" fill="#e51050" />
          <path d="M0 17h22v7H4l-4-3z" fill="#6c0c20" />
          <text x="12" y="14" textAnchor="middle" fontSize="14" fontWeight="700" fill="#fff">A</text>
          <text x="12" y="23" textAnchor="middle" fontSize="5" fontWeight="700" fill="#fff">CAD</text>
        </svg>
      </TaskItem>
      <TaskItem label="Excel" open active>
        <svg viewBox="0 0 24 22" className="h-[22px] w-6">
          <path d="M6 0h9v7H6z" fill="#21a366" />
          <path d="M15 0h9v6h-9z" fill="#33c481" />
          <path d="M6 6h9v5H6z" fill="#107c41" />
          <path d="M15 6h9v5h-9z" fill="#21a366" />
          <path d="M6 11h9v11H6z" fill="#185c37" />
          <path d="M15 11h9v5h-9z" fill="#107c41" />
          <path d="M15 16h9v6h-9z" fill="#185c37" />
          <path d="M0 5h13v12H0z" fill="#107c41" />
          <path d="M3.500 7.500 9.500 14.500M9.500 7.500l-6 7" stroke="#fff" strokeWidth="2" />
        </svg>
      </TaskItem>
      <TaskItem label="Browser Automation Studio" open>
        <svg viewBox="0 0 24 24" className="h-6 w-6" fill="none" stroke="#ccc">
          <rect x="0" y="0" width="24" height="24" rx="3" fill="#252525" stroke="none" />
          <path d="M2.500 9V2.500H9.500M14.500 2.500h7V9M21.500 15v6.500h-7M9.500 21.500h-7V15" strokeWidth="1.200" />
          <path d="M7.500 6.500h6.500c3.500 0 3.500 5 .5 5.300 3.500.4 3 5.700-.5 5.700H7.500zM9.500 11.800h5" stroke="#999" strokeWidth="1.400" />
        </svg>
      </TaskItem>
      <TaskItem label="Browser" open><AppIcon className="h-[18px] w-[22px]" /></TaskItem>

      <div className="ml-auto flex items-center">
        <button className="flex items-center gap-2 text-[13px]">
          <svg viewBox="0 0 26 24" className="h-6 w-[26px]">
            <path d="M6 23a6 6 0 0 1-.5-11.500C7 5 15 4 17.500 10.500 22 10 25 13 25 17s-3 6-6 6z" fill="#b9d2f6" />
            <path d="M6 23a6 6 0 0 1-5-4h23c-1 3-3 4-5 4z" fill="#7da6e6" />
            <circle cx="18" cy="6.500" r="6" fill="#c42b1c" />
            <path d="M16.700 5 18.400 3.700V10" fill="none" stroke="#fff" />
          </svg>
          <span>31°C</span>
          <span>Berawan</span>
        </button>
        <div className="ml-6 flex items-center gap-2">
          <button aria-label="Hidden icons" className="mr-1">
            <svg viewBox="0 0 12 7" className="h-[7px] w-3" fill="none" stroke="#fff" strokeWidth="1.300"><path d="M.5 6.500 6 1l5.500 5.500" /></svg>
          </button>
          <svg viewBox="0 0 12 16" className="h-4 w-3" fill="none" stroke="#fff" strokeWidth="1.100">
            <rect x=".6" y="4.500" width="7.500" height="7" rx="1" />
            <path d="M8.100 7 11.400 5v6L8.100 9.200M3 1.800c2-1.300 4-1.300 6 0M3 14.200c2 1.300 4 1.300 6 0" />
          </svg>
          <svg viewBox="0 0 17 14" className="ml-px h-[14px] w-[17px]" fill="none" stroke="#fff" strokeWidth="1.200">
            <path d="M4 7V10h12V1.500H6.500M11 10v3M8 13.300h6M.6.600h4.500v4.500H.6zM2.800 5v8.500" />
          </svg>
          <svg viewBox="0 0 17 14" className="h-[14px] w-[17px]" fill="none" stroke="#fff" strokeWidth="1.200">
            <path d="M.6 4.800h2.200L6.500 1.500v11L2.800 9.300H.6zM8.800 4.600c1.200 1.500 1.200 3.300 0 4.800M11.200 2.800c2.200 2.700 2.200 5.700 0 8.400M13.600 1c3.300 4 3.300 8 0 12" />
          </svg>
          <svg viewBox="0 0 17 17" className="h-[17px] w-[17px]">
            <path d="M7.500 0C5 1.600 3 2 .5 2v5.500C.5 11 3 14 7.500 16 12 14 14.500 11 14.500 7.500V2C12 2 10 1.600 7.500 0z" fill="#fff" />
            <path d="M7.500 2v13M1 7.500h13" stroke="#333" strokeWidth="1.300" />
            <path d="M11.500 7 17 16.500H6z" fill="#f8c012" />
            <path d="M11.500 10v3.500M11.500 14.500v1" stroke="#222" strokeWidth="1.200" />
          </svg>
          <svg viewBox="0 0 17 13" className="h-[13px] w-[17px]">
            <path d="M4 11.500c-5 0-5-6-.5-6C4 1.500 9 .5 11 4c4-.5 6 2 5.500 4.500-.3 2-1.500 3-3.500 3z" fill="#8c8c8c" />
            <path d="M1 0l15 13" stroke="#ddd" strokeWidth="1.300" />
          </svg>
        </div>
        <div className="ml-2 w-[60px] text-center text-[11px] leading-[18px] whitespace-nowrap">
          <div>14:30</div>
          <div>19/11/2024</div>
        </div>
        <button aria-label="Notifications" className="ml-4 pt-0.5">
          <svg viewBox="0 0 16 16" className="h-4 w-4" fill="none" stroke="#fff" strokeWidth="1.200">
            <path d="M.6.6h14.800v11.500h-4.900L8 14.800l-2.500-2.700H.6z" />
          </svg>
        </button>
        <div className="ml-5 h-10 w-1 border-l border-[#5f6780]" />
      </div>
    </footer>
  );
}

/* ---------- page ---------- */

function EdgeStrip({ side }: { side: string }) {
  return (
    <div className="flex w-0.5 shrink-0 flex-col">
      <div className="h-[34px] shrink-0 bg-[#217346]" />
      <div className={`h-[126px] shrink-0 bg-[#e8e8e8] ${side}`} />
      <div className={`h-7 shrink-0 bg-[#fdf6a8] ${side}`} />
      <div className={`flex-1 bg-[#e8e8e8] ${side}`} />
    </div>
  );
}

export default function App() {
  return (
    <div className="flex h-screen flex-col overflow-hidden bg-white">
      <div className="flex min-h-0 flex-1">
        <EdgeStrip side="border-r border-[#8c8c8c]" />
        <main className="flex min-w-0 flex-1 flex-col border-b-2 border-[#d0d0d0]">
          <div className={`flex h-[25px] shrink-0 items-center pl-0.5 text-xs text-[#8c8c8c] ${ui}`}>
            <AppIcon className="mr-1.5 h-[13px] w-[15px]" />
            <span className="text-[11px]">Browser</span>
            <div className="mr-[18px] ml-auto flex items-center gap-[35px]">
              <button aria-label="Minimize"><svg viewBox="0 0 10 10" className="h-[10px] w-[10px]" stroke="#888"><path d="M0 4.500h10" /></svg></button>
              <button aria-label="Restore"><svg viewBox="0 0 10 10" className="h-[10px] w-[10px]" fill="none" stroke="#888"><path d="M.5 2.500h7v7h-7zM2.500 2.500v-2h7v7h-2" /></svg></button>
              <button aria-label="Close"><svg viewBox="0 0 10 10" className="h-[11px] w-[11px]" stroke="#888"><path d="M0 0l10 10M10 0 0 10" /></svg></button>
            </div>
          </div>
          <div className="flex min-h-0 flex-1">
            <ScriptEditor />
            <div className="ml-px w-[7px] shrink-0 bg-[#e0e0e0]" />
            <div className="ml-px flex min-w-0 flex-1 flex-col">
              <ActionForm />
              <div className="-ml-px h-[5px] shrink-0 bg-[#e0e0e0]" />
              <div className="relative min-h-0 flex-1 bg-white">
                <SideTools />
                <ExcelWindow />
              </div>
            </div>
          </div>
        </main>
        <EdgeStrip side="border-l border-[#8c8c8c]" />
      </div>
      <Taskbar />
    </div>
  );
}
